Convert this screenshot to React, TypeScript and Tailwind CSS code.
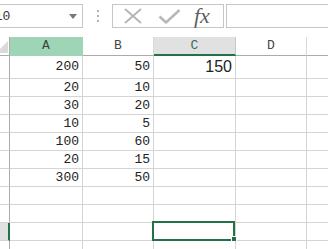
import React from "react";

const mono = { fontFamily: '"Liberation Mono", "DejaVu Sans Mono", monospace' };

const colA = ["200", "20", "30", "10", "100", "20", "300", "", "", "", ""];
const colB = ["50", "10", "20", "5", "60", "15", "50", "", "", "", ""];

function XIcon() {
  return (
    <svg width="20" height="16" viewBox="0 0 20 16">
      <path d="M2 1 L18 15 M18 1 L2 15" stroke="#b3b3b3" strokeWidth="1.8" fill="none" />
    </svg>
  );
}

function CheckIcon() {
  return (
    <svg width="23" height="15" viewBox="0 0 23 15">
      <path d="M1.5 7.5 L8 13.5 L21.5 1" stroke="#b8b8b8" strokeWidth="2.6" fill="none" strokeLinejoin="round" />
    </svg>
  );
}

export default function App() {
  const rowHeights = ["h-[23px]", "h-[18px]", "h-[18px]", "h-[18px]", "h-[18px]", "h-[18px]", "h-[18px]", "h-[18px]", "h-[18px]", "h-[18px]", "h-[18px]"];
  return (
    <div className="w-[328px] h-[249px] overflow-hidden bg-white">
      {/* toolbar */}
      <div className="flex h-[37px] items-start pt-[4px]">
        <div className="w-[83px] h-[24px] border border-l-0 border-[#c6c6c6] flex items-center overflow-hidden">
          <span className="ml-[-13px] text-[13px] text-[#333] leading-none" style={mono}>C10</span>
          <div className="flex-1" />
          <svg width="8" height="5" viewBox="0 0 8 5" className="mr-[5px] mt-[1px]">
            <path d="M0 0 L8 0 L4 5 Z" fill="#777" />
          </svg>
        </div>
        <div className="w-[29px] h-[24px] flex flex-col items-center justify-center gap-[3px]">
          <div className="w-[2px] h-[2px] bg-[#b5b5b5]" />
          <div className="w-[2px] h-[2px] bg-[#b5b5b5]" />
          <div className="w-[2px] h-[2px] bg-[#b5b5b5]" />
        </div>
        <div className="w-[112px] h-[24px] border border-[#c6c6c6] flex items-center">
          <div className="ml-[10px] flex items-center"><XIcon /></div>
          <div className="ml-[15px] flex items-center"><CheckIcon /></div>
          <span
            className="ml-[13px] text-[22px] italic text-[#5e5e5e] leading-none"
            style={{ fontFamily: '"Liberation Serif", "DejaVu Serif", serif' }}
          >
            fx
          </span>
        </div>
        <div className="ml-[2px] flex-1 h-[24px] border border-r-0 border-[#c6c6c6]" />
      </div>

      {/* grid */}
      <div className="grid grid-cols-[10px_73px_71px_82px_71px_1fr] text-[13px]" style={mono}>
        {/* header row */}
        <div className="h-[19px] border-r border-b border-[#ababab] relative overflow-hidden">
          <svg width="10" height="19" viewBox="0 0 10 19" className="block">
            <path d="M8 4 L8 16 L-4 16 Z" fill="#dadada" />
          </svg>
        </div>
        <div className="h-[19px] bg-[#9fd5b7] border-r border-b border-[#9fd5b7] flex items-center justify-center text-[#35463c]">A</div>
        <div className="h-[19px] border-r border-b border-r-[#d9d9d9] border-b-[#ababab] flex items-center justify-center text-[#444]">B</div>
        <div className="h-[19px] bg-[#e1e1e1] border-r border-r-[#c8c8c8] border-b-2 border-b-[#217346] flex items-center justify-center text-[#3d6b52]">C</div>
        <div className="h-[19px] border-r border-b border-r-[#d9d9d9] border-b-[#ababab] flex items-center justify-center text-[#444]">D</div>
        <div className="h-[19px] border-b border-[#ababab]" />

        {rowHeights.map((h, i) => {
          const selected = i === 9;
          return (
            <React.Fragment key={i}>
              <div
                className={`${h} border-b border-b-[#d4d4d4] ${
                  selected ? "bg-[#e1e1e1] border-r-2 border-r-[#217346]" : "border-r border-r-[#ababab]"
                }`}
              />
              <div className={`${h} border-r border-b border-[#d4d4d4] flex items-center justify-end pr-[3px] text-[#222]`}>
                {colA[i]}
              </div>
              <div className={`${h} border-r border-b border-[#d4d4d4] flex items-center justify-end pr-[3px] text-[#222]`}>
                {colB[i]}
              </div>
              <div className={`${h} border-r border-b border-[#d4d4d4] flex items-center justify-end pr-[3px] relative`}>
                {i === 0 && (
                  <span
                    className="text-[16px] text-[#222] leading-none"
                    style={{ fontFamily: '"Liberation Sans", Arial, sans-serif' }}
                  >
                    150
                  </span>
                )}
                {selected && (
                  <>
                    <div className="absolute left-[-2px] top-[-2px] right-0 bottom-[-1px] border-2 border-[#217346]" />
                    <div className="absolute right-[-2px] bottom-[-2px] w-[6px] h-[6px] bg-[#217346] border border-white" />
                  </>
                )}
              </div>
              <div className={`${h} border-r border-b border-[#d4d4d4]`} />
              <div className={`${h} border-b border-[#d4d4d4]`} />
            </React.Fragment>
          );
        })}
      </div>
    </div>
  );
}
